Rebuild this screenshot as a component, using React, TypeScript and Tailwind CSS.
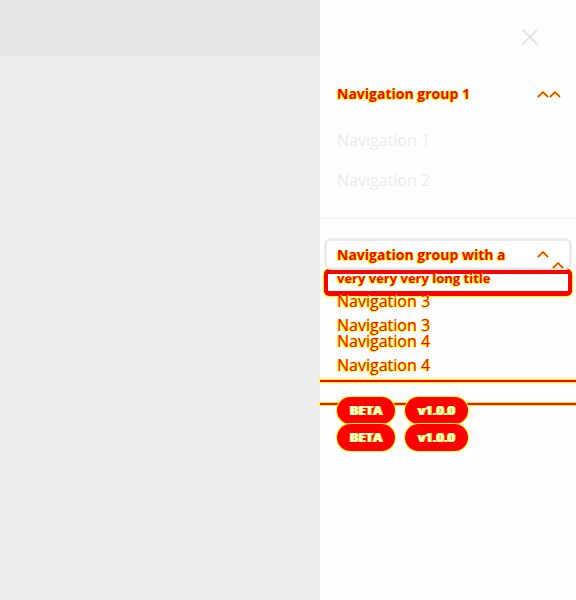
import { X } from 'lucide-react';

const diffText = 'text-[#ff0000] [text-shadow:-1px_1px_0_#ffff00,1px_0_0_#ffff00]';

function Chevron({ className = '' }: { className?: string }) {
  return (
    <svg width="12" height="7" viewBox="0 0 12 7" className={className} fill="none">
      <path d="M1 6 L6 1 L11 6" stroke="#ffff00" strokeWidth="2.4" />
      <path d="M1 6 L6 1 L11 6" stroke="#ff0000" strokeWidth="1.2" />
    </svg>
  );
}

function Pill({ label, width }: { label: string; width: string }) {
  return (
    <div className={`relative flex flex-col items-center ${width}`}>
      <div className="absolute left-1 right-1 top-[24px] h-[10px] rounded-full bg-[#e8e8e8]" />
      {[0, 1].map((i) => (
        <span
          key={i}
          className="relative z-10 flex h-[27px] w-full items-center justify-center rounded-full bg-[#ff0000] text-[13px] font-bold text-white ring-1 ring-[#ffff00] [text-shadow:1px_0_0_#ffff00,-1px_0_0_#ffff00] first:mb-[1px]"
        >
          {label}
        </span>
      ))}
    </div>
  );
}

export default function App() {
  return (
    <div className="flex h-[600px] w-[576px] font-['Open_Sans',sans-serif]">
      {/* page behind the drawer */}
      <div className="flex w-[320px] flex-col">
        <div className="h-[56px] bg-[#e5e5e5]" />
        <div className="flex-1 bg-[#eeeeee]" />
      </div>

      {/* drawer */}
      <div className="flex w-[256px] flex-col bg-[#fefefe]">
        <div className="flex h-[72px] items-start justify-end pr-[32px] pt-[23px]">
          <X className="h-[28px] w-[28px] text-[#e5e5e5]" strokeWidth={1.8} />
        </div>

        <div className="flex h-[42px] items-center justify-between pl-[17px] pr-[15px]">
          <span className={`text-[14px] font-bold ${diffText}`}>Navigation group 1</span>
          <div className="flex items-end">
            <Chevron />
            <Chevron className="mt-[2px]" />
          </div>
        </div>

        <div className="mt-[6px] flex h-[40px] items-center pl-[17px] text-[16px] text-[#ebebeb]">Navigation 1</div>
        <div className="flex h-[40px] items-center pl-[17px] text-[16px] text-[#ebebeb]">Navigation 2</div>

        <div className="mt-[18px] h-px bg-[#f3f3f3]" />

        <div className="px-[4px] pt-[19px]">
          <div className="relative rounded-[7px] border-[3px] border-[#ebebeb] bg-white">
            <div className="flex h-[26px] items-center justify-between pl-[10px] pr-[20px]">
              <span className={`text-[14px] font-bold ${diffText}`}>Navigation group with a</span>
              <Chevron />
            </div>
            <div className="absolute right-[5px] top-[21px]">
              <Chevron />
            </div>
          </div>
          <div className="-mt-[1px] rounded-[5px] border-x-[4px] border-b-[5px] border-t-[5px] border-[#ff0000] bg-white shadow-[0_0_0_1px_#ffff00]">
            <div className="flex h-[17px] items-center pl-[9px]">
              <span className={`relative -top-[4px] text-[13px] font-bold ${diffText}`}>very very very long title</span>
            </div>
          </div>
        </div>

        <div className={`flex flex-col pl-[17px] text-[16px] leading-[20px] ${diffText}`}>
          <span className="-mt-[5px]">Navigation 3</span>
          <span className="mt-[4px]">Navigation 3</span>
          <span className="-mt-[4px]">Navigation 4</span>
          <span className="mt-[4px]">Navigation 4</span>
        </div>

        <div className="mt-[5px] h-[2px] bg-[#ff0000] shadow-[0_0_0_1px_#ffff00]" />

        <div className="relative mt-[15px] flex gap-[10px] pl-[17px]">
          <div className="absolute left-0 right-0 top-[6px] h-[2px] bg-[#ff0000] shadow-[0_0_0_1px_#ffff00]" />
          <Pill label="BETA" width="w-[58px]" />
          <Pill label="v1.0.0" width="w-[63px]" />
        </div>
      </div>
    </div>
  );
}
